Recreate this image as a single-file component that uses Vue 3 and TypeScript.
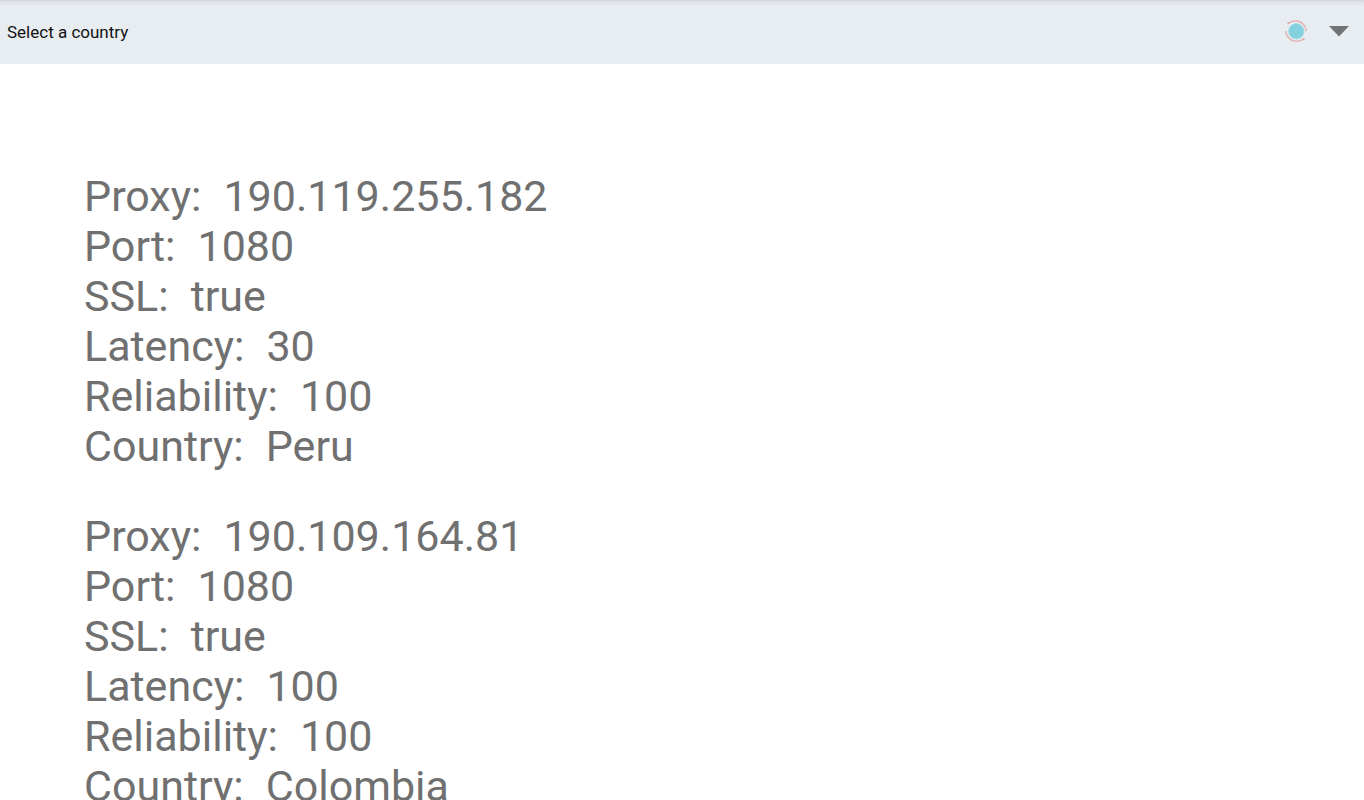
<script setup lang="ts">
import { ref } from 'vue'

interface ProxyEntry {
  proxy: string
  port: number
  ssl: boolean
  latency: number
  reliability: number
  country: string
}

const proxies: ProxyEntry[] = [
  { proxy: '190.119.255.182', port: 1080, ssl: true, latency: 30, reliability: 100, country: 'Peru' },
  { proxy: '190.109.164.81', port: 1080, ssl: true, latency: 100, reliability: 100, country: 'Colombia' },
]

const selected = ref('')

const rows = (p: ProxyEntry): [string, string][] => [
  ['Proxy', p.proxy],
  ['Port', String(p.port)],
  ['SSL', String(p.ssl)],
  ['Latency', String(p.latency)],
  ['Reliability', String(p.reliability)],
  ['Country', p.country],
]
</script>

<template>
  <div class="page">
    <header class="bar">
      <select v-model="selected" class="country" aria-label="Select a country">
        <option value="">Select a country</option>
        <option v-for="p in proxies" :key="p.country" :value="p.country">{{ p.country }}</option>
      </select>
      <div class="marks" aria-hidden="true">
        <svg width="24" height="24" viewBox="0 0 24 24">
          <circle cx="12.3" cy="12.3" r="7.7" fill="#83d0de" stroke="#a9dde6" stroke-width="0.8" />
          <path d="M4 4.600C8 1 15.500 1 19.500 5.400c1.900 2.100 2.700 4.200 2.700 6.800" fill="none" stroke="#e6b3b4" stroke-width="1.500" />
          <path d="M20 19.800C16 23.200 8.500 23.200 4.600 18.800c-1.900-2.100-2.800-4.200-2.700-6.800" fill="none" stroke="#e6b3b4" stroke-width="1.500" />
          <circle cx="4.500" cy="4.200" r="1.100" fill="#dfacad" />
          <circle cx="19.600" cy="20" r="1.100" fill="#dfacad" />
        </svg>
        <svg width="20" height="12" viewBox="0 0 20 12">
          <path d="M0 1h20L10 11.500z" fill="#707274" />
        </svg>
      </div>
    </header>
    <main class="list">
      <dl v-for="p in proxies" :key="p.proxy" class="entry">
        <div v-for="[label, value] in rows(p)" :key="label" class="row">
          <dt>{{ label }}:</dt>
          <dd>{{ value }}</dd>
        </div>
      </dl>
    </main>
  </div>
</template>

<style>
body {
  margin: 0;
  background: #fff;
}
</style>

<style scoped>
.page {
  display: flex;
  flex-direction: column;
  height: 100vh;
  font-family: Roboto, "Liberation Sans", sans-serif;
}
.bar {
  display: grid;
  flex: none;
  height: 64px;
  background: linear-gradient(#d2d6da, #e0e4e8 2px, #e8edf1 6px);
}
.country,
.marks {
  grid-area: 1 / 1;
}
.country {
  appearance: none;
  width: 100%;
  margin: 0;
  padding: 0 88px 0 7px;
  border: 0;
  border-radius: 0;
  outline: 0;
  background: transparent;
  color: #111;
  font: 17px/20px Roboto, "Liberation Sans", sans-serif;
}
.marks {
  display: flex;
  align-items: center;
  justify-self: end;
  gap: 21px;
  padding: 0 15px 2px 0;
  pointer-events: none;
}
.list {
  flex: 1;
  min-height: 0;
  overflow-y: auto;
  scrollbar-width: none;
  padding: 107px 84px 0;
}
.entry {
  margin: 0 0 40px;
  color: #707070;
  font-size: 43px;
  line-height: 50px;
}
.row {
  display: flex;
  gap: 22px;
}
dd {
  margin: 0;
}
</style>
